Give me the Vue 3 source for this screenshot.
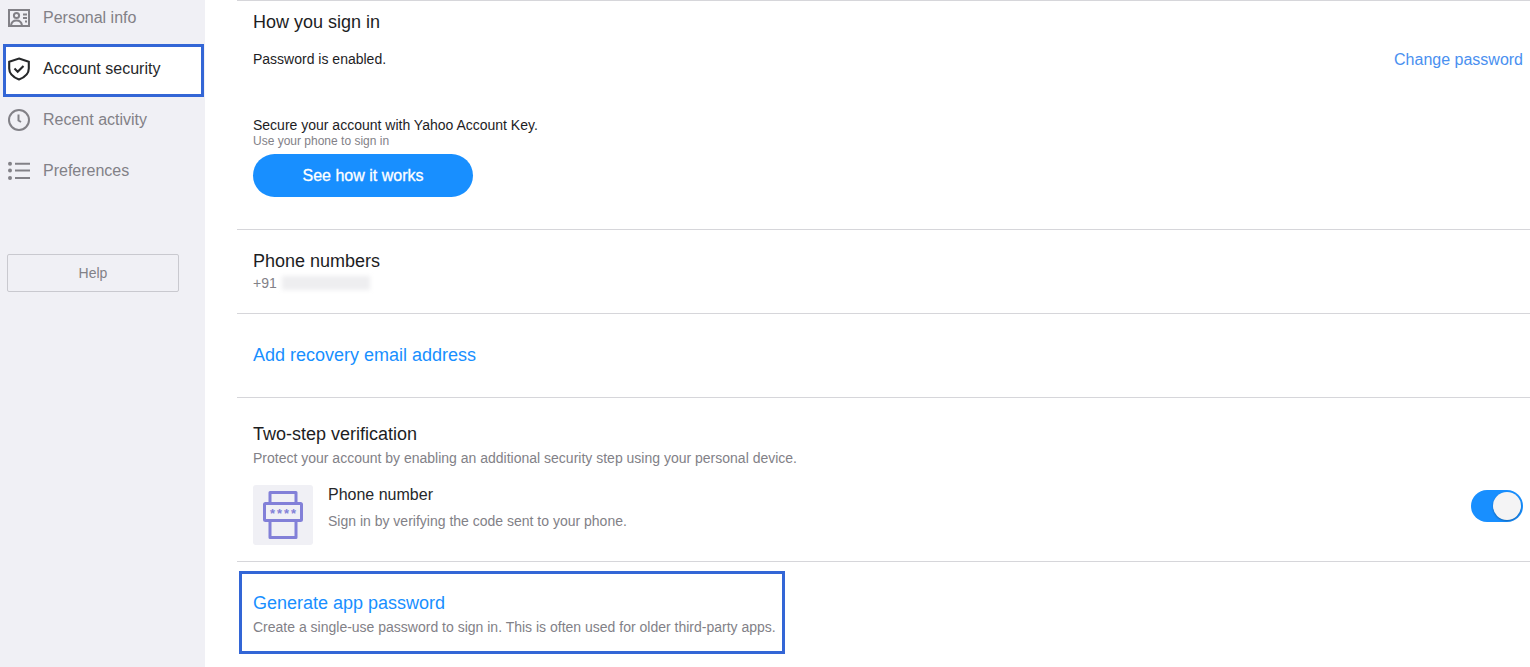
<script setup>
const navItems = [
  { label: 'Personal info', icon: 'person' },
  { label: 'Account security', icon: 'shield', active: true },
  { label: 'Recent activity', icon: 'clock' },
  { label: 'Preferences', icon: 'list' },
]
</script>

<template>
  <div class="page">
    <aside class="side">
      <nav class="nav">
        <div v-for="item in navItems" :key="item.label" class="nav-item" :class="{ active: item.active }">
          <svg class="nav-icon" width="24" height="24" viewBox="0 0 24 24" fill="none" stroke="currentColor">
            <template v-if="item.icon === 'person'">
              <rect x="1" y="4" width="20" height="16" stroke-width="2" />
              <circle cx="8.500" cy="9.500" r="2.600" stroke-width="2" />
              <path d="M3 19.500c.5-3.600 2.600-5 5.500-5s5 1.400 5.500 5" stroke-width="2" />
              <path d="M15 8.500h4M15 12h4M17 15.500h2" stroke-width="2" />
            </template>
            <template v-else-if="item.icon === 'shield'">
              <path d="M11 1.500l9.800 3.300v6.700c0 5.300-4 8.800-9.800 11-5.800-2.200-9.800-5.700-9.800-11V4.800z" stroke-width="2.100" />
              <path d="M6.500 11.500l3.200 3.200 5.800-5.800" stroke-width="2.100" />
            </template>
            <template v-else-if="item.icon === 'clock'">
              <circle cx="11" cy="12" r="10" stroke-width="2" />
              <path d="M10.500 6.500v6l2.500 1.500" stroke-width="2" />
            </template>
            <template v-else>
              <circle cx="2" cy="4.700" r="2" fill="currentColor" stroke="none" />
              <circle cx="2" cy="11.500" r="2" fill="currentColor" stroke="none" />
              <circle cx="2" cy="19" r="2" fill="currentColor" stroke="none" />
              <path d="M7 4.700h15M7 11.500h15M7 19h15" stroke-width="2" />
            </template>
          </svg>
          <span>{{ item.label }}</span>
        </div>
      </nav>
      <button class="help">Help</button>
    </aside>

    <main class="main">
      <section class="sec sign">
        <h2 class="title">How you sign in</h2>
        <div class="row pw">
          <span class="dark">Password is enabled.</span>
          <a class="change">Change password</a>
        </div>
        <p class="dark key">Secure your account with Yahoo Account Key.</p>
        <p class="tiny">Use your phone to sign in</p>
        <button class="cta">See how it works</button>
      </section>

      <section class="sec phones">
        <h2 class="title">Phone numbers</h2>
        <div class="phone-line">+91 <span class="blur"></span></div>
      </section>

      <section class="sec recovery">
        <a class="link">Add recovery email address</a>
      </section>

      <section class="sec two">
        <h2 class="title">Two-step verification</h2>
        <p class="grey">Protect your account by enabling an additional security step using your personal device.</p>
        <div class="row method">
          <div class="tile">
            <svg width="40" height="48" viewBox="0 0 40 48" fill="none" stroke="#8280d8" stroke-width="3">
              <path d="M7 12V1.500h26V12M7 30v16.500h26V30" stroke-linejoin="round" />
              <rect x="1.500" y="12.500" width="37" height="17" rx="1" />
              <text x="21" y="27" text-anchor="middle" class="stars" fill="#8280d8" stroke="none">****</text>
            </svg>
          </div>
          <div class="method-text">
            <div class="method-name">Phone number</div>
            <div class="grey">Sign in by verifying the code sent to your phone.</div>
          </div>
          <div class="toggle"><span class="knob"></span></div>
        </div>
      </section>

      <section class="app">
        <div class="app-box">
          <a class="link">Generate app password</a>
          <p class="grey">Create a single-use password to sign in. This is often used for older third-party apps.</p>
        </div>
      </section>
    </main>
  </div>
</template>

<style>
html, body { margin: 0; background: #fff; overflow: hidden; }
</style>

<style scoped>
.page {
  display: flex;
  width: 1530px;
  height: 667px;
  overflow: hidden;
  font-family: "Liberation Sans", Arial, sans-serif;
  color: #828187;
}
.side {
  flex: 0 0 205px;
  background: #f0f0f5;
  box-sizing: border-box;
  padding-left: 3px;
}
.nav { margin-top: -9px; }
.nav-item {
  box-sizing: border-box;
  width: 201px;
  height: 53px;
  margin-bottom: -2px;
  display: flex;
  align-items: center;
  gap: 11px;
  padding-left: 4px;
  font-size: 16px;
  border: 3px solid transparent;
  border-left-width: 1px;
  border-right-width: 1px;
  color: #828187;
}
.nav-item.active {
  background: #fff;
  color: #26282a;
  border: 3px solid #3366d6;
  padding-left: 2px;
  margin-top: 2px;
  margin-bottom: -4px;
}
.nav-item.active span,
.nav-item.active .nav-icon { margin-bottom: 3px; }
.nav-icon { flex: none; }
.help {
  display: block;
  margin: 59px 0 0 4px;
  width: 172px;
  height: 38px;
  border: 1px solid #c9c9cf;
  border-radius: 2px;
  background: transparent;
  font: 14px "Liberation Sans", Arial, sans-serif;
  color: #828187;
}
.main {
  width: 1293px;
  margin-left: 32px;
  flex: none;
}
.sec {
  box-sizing: border-box;
  border-top: 1px solid #d6d6da;
  padding-left: 16px;
}
.title {
  margin: 0;
  font-size: 18px;
  font-weight: 400;
  line-height: 20px;
  color: #1d1d1f;
}
.row { display: flex; align-items: center; }
.sign { height: 229px; padding-top: 11px; }
.pw { justify-content: space-between; margin-top: 17px; height: 20px; }
.dark { font-size: 14px; color: #1d1d1f; }
.change { font-size: 16px; color: #4a90f0; margin-right: 7px; margin-top: 2px; }
.key { margin: 48px 0 0; line-height: 16px; }
.tiny { margin: 1px 0 0; font-size: 12px; line-height: 14px; color: #828187; }
.cta {
  display: block;
  margin-top: 6px;
  width: 220px;
  height: 43px;
  border: 0;
  border-radius: 22px;
  background: #188fff;
  color: #fff;
  font: 400 16px "Liberation Sans", Arial, sans-serif;
  -webkit-text-stroke: 0.3px #fff;
}
.phones { height: 84px; padding-top: 21px; }
.phone-line { font-size: 14px; margin-top: 2px; display: flex; align-items: center; gap: 5px; height: 20px; }
.blur {
  display: inline-block;
  width: 88px;
  height: 14px;
  background: #eeeef0;
  filter: blur(2px);
}
.recovery { height: 84px; display: flex; align-items: center; padding-bottom: 2px; }
.link { font-size: 18px; color: #188fff; line-height: 20px; }
.two { height: 164px; padding-top: 26px; }
.grey { margin: 0; font-size: 14px; line-height: 16px; color: #828187; }
.two > .grey { margin-top: 6px; }
.method { margin-top: 19px; align-items: flex-start; }
.tile {
  width: 60px;
  height: 60px;
  background: #f0f0f5;
  border-radius: 3px;
  display: flex;
  align-items: center;
  justify-content: center;
  flex: none;
}
.stars { font: 700 13px "Liberation Sans", Arial, sans-serif; letter-spacing: 2px; }
.method-text { margin-left: 15px; flex: 1; padding-top: 1px; }
.method-name { font-size: 16px; line-height: 18px; color: #26282a; margin-bottom: 9px; }
.toggle {
  width: 52px;
  height: 32px;
  margin: 5px 7px 0 0;
  border-radius: 16px;
  background: #188fff;
  position: relative;
}
.knob {
  position: absolute;
  right: 2px;
  top: 2px;
  width: 28px;
  height: 28px;
  border-radius: 50%;
  background: #f4f4f5;
  box-shadow: 0 1px 2px rgba(0, 0, 0, .3);
}
.app { border-top: 1px solid #d6d6da; padding-top: 9px; padding-left: 2px; }
.app-box {
  box-sizing: border-box;
  width: 546px;
  height: 83px;
  border: 3px solid #3366d6;
  padding: 19px 0 0 11px;
}
.app-box .link { display: block; }
.app-box .grey { margin-top: 6px; }
</style>
